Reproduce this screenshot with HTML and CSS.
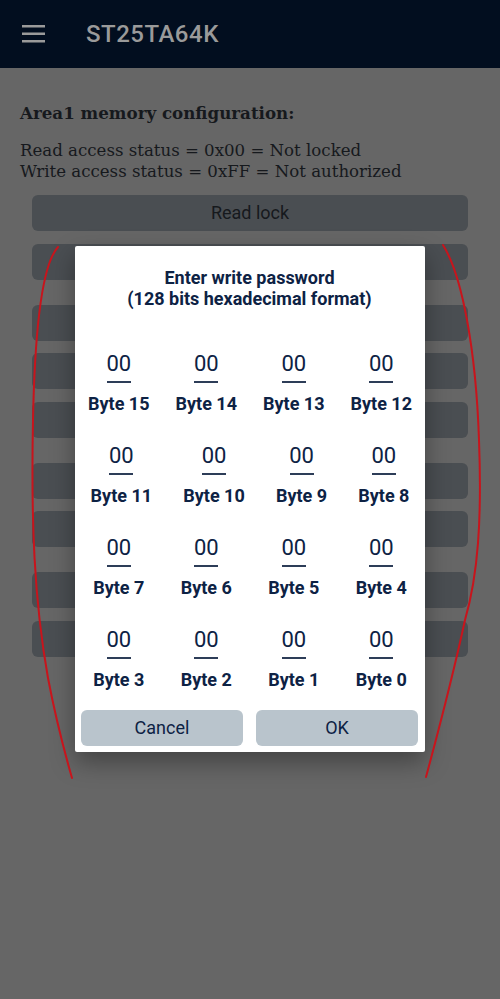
FILE: index.html
```html
<!DOCTYPE html>
<html lang="en">
<head>
<meta charset="utf-8">
<title>ST25TA64K</title>
<link rel="stylesheet" href="styles.css">
</head>
<body>
<div class="screen">
  <header class="appbar">
    <svg class="menu" width="23" height="18" viewBox="0 0 23 18" aria-hidden="true">
      <rect x="0" y="0" width="23" height="2.5" fill="#9a9a9a"/>
      <rect x="0" y="7.5" width="23" height="2.5" fill="#9a9a9a"/>
      <rect x="0" y="15" width="23" height="2.5" fill="#9a9a9a"/>
    </svg>
    <h1 class="title">ST25TA64K</h1>
  </header>

  <main class="content">
    <h2 class="heading">Area1 memory configuration:</h2>
    <p class="status">Read access status = 0x00 = Not locked<br>Write access status = 0xFF = Not authorized</p>
    <div class="actions">
      <div class="group">
        <div class="btn">Read lock</div>
        <div class="btn"></div>
      </div>
      <div class="group">
        <div class="btn"></div>
        <div class="btn"></div>
        <div class="btn"></div>
      </div>
      <div class="group">
        <div class="btn"></div>
        <div class="btn"></div>
      </div>
      <div class="group">
        <div class="btn"></div>
        <div class="btn"></div>
      </div>
    </div>
  </main>

  <div class="dialog">
    <div class="dialog-title">Enter write password<br>(128 bits hexadecimal format)</div>
    <div class="bytes">
      <div class="row">
        <div class="cell"><div class="field">00</div><div class="label">Byte 15</div></div>
        <div class="cell"><div class="field">00</div><div class="label">Byte 14</div></div>
        <div class="cell"><div class="field">00</div><div class="label">Byte 13</div></div>
        <div class="cell"><div class="field">00</div><div class="label">Byte 12</div></div>
      </div>
      <div class="row">
        <div class="cell"><div class="field">00</div><div class="label">Byte 11</div></div>
        <div class="cell"><div class="field">00</div><div class="label">Byte 10</div></div>
        <div class="cell"><div class="field">00</div><div class="label">Byte 9</div></div>
        <div class="cell"><div class="field">00</div><div class="label">Byte 8</div></div>
      </div>
      <div class="row">
        <div class="cell"><div class="field">00</div><div class="label">Byte 7</div></div>
        <div class="cell"><div class="field">00</div><div class="label">Byte 6</div></div>
        <div class="cell"><div class="field">00</div><div class="label">Byte 5</div></div>
        <div class="cell"><div class="field">00</div><div class="label">Byte 4</div></div>
      </div>
      <div class="row">
        <div class="cell"><div class="field">00</div><div class="label">Byte 3</div></div>
        <div class="cell"><div class="field">00</div><div class="label">Byte 2</div></div>
        <div class="cell"><div class="field">00</div><div class="label">Byte 1</div></div>
        <div class="cell"><div class="field">00</div><div class="label">Byte 0</div></div>
      </div>
    </div>
    <div class="dialog-actions">
      <div class="dbtn">Cancel</div>
      <div class="dbtn">OK</div>
    </div>
  </div>

  <svg class="annotation" width="500" height="999" viewBox="0 0 500 999" aria-hidden="true">
    <path d="M58 247 C 44 262, 35 320, 33 420 C 31 520, 34 600, 48 678 C 55 715, 64 750, 72 778" fill="none" stroke="#c8141c" stroke-width="2" stroke-linecap="round"/>
    <path d="M443 245 C 462 275, 476 350, 479 440 C 482 520, 478 575, 465 620 C 452 680, 436 740, 426 777" fill="none" stroke="#c8141c" stroke-width="2" stroke-linecap="round"/>
  </svg>
</div>
</body>
</html>
```

FILE: styles.css
```css
html, body {
  margin: 0;
  padding: 0;
}

body {
  background: #666666;
  font-family: Roboto, "Noto Sans", sans-serif;
}

.screen {
  position: relative;
  width: 500px;
  height: 999px;
  overflow: hidden;
  background: #666666;
}

.appbar {
  height: 68px;
  background: #020e1f;
  display: flex;
  align-items: center;
  padding-left: 22px;
  box-sizing: border-box;
}

.menu {
  display: block;
  flex: none;
}

.title {
  margin: 0 0 0 41px;
  font-family: Roboto, sans-serif;
  font-weight: 500;
  font-size: 24px;
  line-height: 28px;
  color: #9a9a9a;
  letter-spacing: 0.5px;
}

.content {
  padding: 33px 20px 0;
}

.heading {
  margin: 0;
  font-family: "DejaVu Serif", "Liberation Serif", serif;
  font-weight: bold;
  font-size: 16.7px;
  line-height: 24px;
  color: #16191d;
}

.status {
  margin: 14.5px 0 0;
  font-family: "DejaVu Serif", "Liberation Serif", serif;
  font-size: 16.6px;
  line-height: 21px;
  color: #16191d;
}

.actions {
  margin: 13.5px 12px 0;
  display: flex;
  flex-direction: column;
  gap: 25px;
}

.group {
  display: flex;
  flex-direction: column;
  gap: 12.5px;
}

.btn {
  height: 36px;
  border-radius: 6px;
  background: #4a4e52;
  color: #16191d;
  font-size: 18px;
  line-height: 36px;
  text-align: center;
}

.dialog {
  position: absolute;
  left: 75px;
  top: 246px;
  width: 350px;
  height: 506px;
  box-sizing: border-box;
  background: #ffffff;
  border-radius: 2px;
  padding: 20.5px 7px 6px 6px;
  box-shadow: 0 10px 24px rgba(0, 0, 0, 0.35);
  color: #0d2244;
}

.dialog-title {
  font-weight: bold;
  font-size: 18px;
  line-height: 21px;
  text-align: center;
}

.bytes {
  margin: 31.5px -7px 0 -6px;
  display: flex;
  flex-direction: column;
  gap: 18px;
}

.row {
  display: flex;
}

.cell {
  flex: 1 1 auto;
  text-align: center;
}

.field {
  width: 24px;
  margin: 0 auto;
  padding: 12px 0 5px;
  border-bottom: 2px solid #2d3d58;
  font-size: 22px;
  line-height: 24px;
  white-space: nowrap;
  display: flex;
  justify-content: center;
}

.label {
  margin-top: 11px;
  font-weight: bold;
  font-size: 18px;
  line-height: 20px;
  white-space: nowrap;
}

.dialog-actions {
  margin-top: 20px;
  display: flex;
  gap: 13px;
}

.dbtn {
  flex: 1 1 0;
  height: 36px;
  border-radius: 6px;
  background: #b9c4cc;
  font-size: 18px;
  line-height: 36px;
  text-align: center;
  color: #0d2244;
}

.annotation {
  position: absolute;
  left: 0;
  top: 0;
  pointer-events: none;
}
```
